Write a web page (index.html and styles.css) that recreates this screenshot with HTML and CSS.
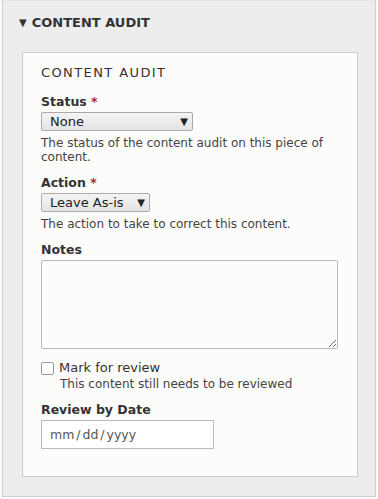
FILE: index.html
```html
<!DOCTYPE html>
<html lang="en">
<head>
    <meta charset="UTF-8">
    <meta name="viewport" content="width=device-width, initial-scale=1.0">
    <title>Content Audit</title>
    <link rel="stylesheet" href="styles.css">
</head>
<body>
    <!-- Collapsible details panel -->
    <details class="panel" open>
        <summary class="panel-title"><span class="arrow">&#9660;</span>Content Audit</summary>

        <div class="card">
            <h2 class="card-title">Content Audit</h2>

            <div class="form-item">
                <label for="status">Status <span class="req">*</span></label>
                <div class="select-box select-status">
                    <span>None</span>
                    <span class="caret">&#9660;</span>
                </div>
                <div class="description">The status of the content audit on this piece of content.</div>
            </div>

            <div class="form-item">
                <label for="action">Action <span class="req">*</span></label>
                <div class="select-box select-action">
                    <span>Leave As-is</span>
                    <span class="caret">&#9660;</span>
                </div>
                <div class="description">The action to take to correct this content.</div>
            </div>

            <div class="form-item">
                <label for="notes">Notes</label>
                <textarea id="notes" class="notes"></textarea>
            </div>

            <div class="form-item check-item">
                <div class="check-row">
                    <span class="checkbox"></span>
                    <span class="check-label">Mark for review</span>
                </div>
                <div class="description check-desc">This content still needs to be reviewed</div>
            </div>

            <div class="form-item last-item">
                <label for="review">Review by Date</label>
                <div class="date-box">mm / dd / yyyy</div>
            </div>
        </div>
    </details>
</body>
</html>
```

FILE: styles.css
```css
body {
    margin: 0;
    padding: 0 2px 1px 2px;
    background-color: #fafafa;
    font-family: "DejaVu Sans", "Lucida Grande", sans-serif;
    color: #333;
}

.panel {
    background-color: #ededed;
    border: 1px solid #cfcfcf;
    border-top-color: #e4e4e4;
    padding: 0 17px 19px 19px;
}

.panel-title {
    list-style: none;
    display: block;
    height: 51px;
    padding-top: 14px;
    margin-left: -3px;
    box-sizing: border-box;
    font-size: 13px;
    line-height: 16px;
    font-weight: bold;
    text-transform: uppercase;
    color: #333;
}
.panel-title::-webkit-details-marker {
    display: none;
}
.panel-title .arrow {
    font-size: 10px;
    margin-right: 5px;
    vertical-align: 1px;
}

.card {
    background-color: #fcfcfa;
    border: 1px solid #ccc;
    padding: 12px 18px 27px 18px;
}

.card-title {
    margin: 0 0 13px 0;
    font-size: 13px;
    line-height: 16px;
    font-weight: normal;
    letter-spacing: 1.4px;
    text-transform: uppercase;
    color: #333;
}

.form-item {
    margin-bottom: 11px;
}
.last-item {
    margin-bottom: 0;
}

.form-item label {
    display: block;
    font-size: 12.5px;
    font-weight: bold;
    color: #333;
    line-height: 16px;
}
.req {
    color: #b3262f;
}

.select-box {
    display: flex;
    justify-content: space-between;
    align-items: center;
    height: 19px;
    margin-top: 2px;
    padding: 0 4px 0 8px;
    box-sizing: border-box;
    border: 1px solid #aaa;
    border-radius: 2px;
    background: linear-gradient(#f4f4f4, #e4e4e4);
    font-size: 13px;
    color: #222;
}
.select-status {
    width: 152px;
}
.select-action {
    width: 109px;
}
.select-box .caret {
    font-size: 10px;
}

.description {
    font-size: 12px;
    line-height: 14px;
    color: #444;
    margin-top: 5px;
}

.notes {
    display: block;
    width: 297px;
    height: 89px;
    margin-top: 2px;
    border: 1px solid #b9b9b9;
    border-radius: 2px;
    background-color: #fcfcfa;
    box-sizing: border-box;
}

.check-item {
    margin-top: 11px;
}
.check-row {
    display: flex;
    align-items: center;
    line-height: 16px;
}
.checkbox {
    width: 11px;
    height: 11px;
    border: 1px solid #999;
    border-radius: 2px;
    background-color: #fff;
    margin-right: 5px;
}
.check-label {
    font-size: 13px;
    color: #333;
}
.check-desc {
    margin-left: 19px;
    margin-top: 1px;
}

.date-box {
    width: 173px;
    height: 29px;
    margin-top: 2px;
    padding-left: 8px;
    box-sizing: border-box;
    border: 1px solid #bbb;
    background-color: #fff;
    font-size: 12.5px;
    word-spacing: -2px;
    color: #555;
    display: flex;
    align-items: center;
}
```
